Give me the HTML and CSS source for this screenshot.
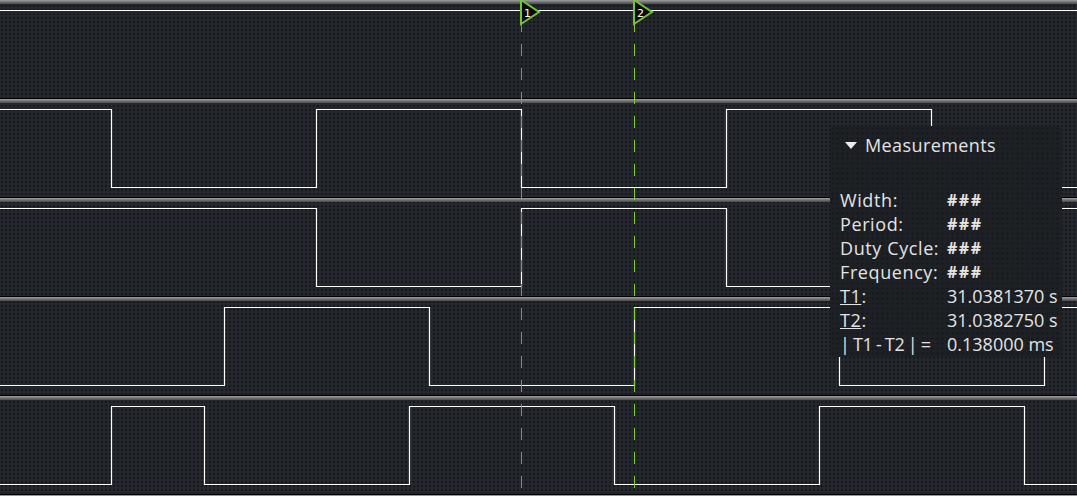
FILE: index.html
```html
<!DOCTYPE html>
<html lang="en">
<head>
    <meta charset="UTF-8">
    <title>Logic Analyzer</title>
    <link rel="stylesheet" href="styles.css">
</head>
<body>

    <div class="scope">

        <!-- channels -->
        <div class="channel">
            <div class="rail"></div>
            <svg class="wave" width="1077" height="94"><polyline points="0,6.5 1077,6.5"/></svg>
        </div>
        <div class="channel">
            <div class="rail"></div>
            <svg class="wave" width="1077" height="94"><polyline points="0,6.5 111.5,6.5 111.5,84.5 316.5,84.5 316.5,6.5 521.5,6.5 521.5,84.5 726.5,84.5 726.5,6.5 931.5,6.5 931.5,84.5 1077,84.5"/></svg>
        </div>
        <div class="channel">
            <div class="rail"></div>
            <svg class="wave" width="1077" height="94"><polyline points="0,6.5 316.5,6.5 316.5,84.5 521.5,84.5 521.5,6.5 726.5,6.5 726.5,84.5 931.5,84.5 931.5,6.5 1077,6.5"/></svg>
        </div>
        <div class="channel">
            <div class="rail"></div>
            <svg class="wave" width="1077" height="94"><polyline points="0,84.5 224.5,84.5 224.5,6.5 429.5,6.5 429.5,84.5 634.5,84.5 634.5,6.5 839.5,6.5 839.5,84.5 1044.5,84.5 1044.5,6.5 1077,6.5"/></svg>
        </div>
        <div class="channel">
            <div class="rail"></div>
            <svg class="wave" width="1077" height="94"><polyline points="0,84.5 111.5,84.5 111.5,6.5 204.5,6.5 204.5,84.5 409.5,84.5 409.5,6.5 614.5,6.5 614.5,84.5 819.5,84.5 819.5,6.5 1024.5,6.5 1024.5,84.5 1077,84.5"/></svg>
        </div>
        <div class="channel">
            <div class="rail"></div>
        </div>

        <!-- cursors -->
        <div class="cursor c1">
            <svg class="flag" width="22" height="26">
                <polygon points="1,0 1,24 19,12"/>
                <text x="4" y="17">1</text>
            </svg>
        </div>
        <div class="cursor c2">
            <svg class="flag" width="22" height="26">
                <polygon points="1,0 1,24 19,12"/>
                <text x="4" y="17">2</text>
            </svg>
        </div>

        <!-- measurements panel -->
        <div class="measure">
            <div class="measure-title"><span class="caret"></span>Measurements</div>
            <div class="measure-rows">
                <span class="label">Width:</span><span class="hash">###</span>
                <span class="label">Period:</span><span class="hash">###</span>
                <span class="label">Duty Cycle:</span><span class="hash">###</span>
                <span class="label">Frequency:</span><span class="hash">###</span>
                <span class="label"><u>T1</u>:</span><span>31.0381370 s</span>
                <span class="label"><u>T2</u>:</span><span>31.0382750 s</span>
                <span class="label diff">| T1 - T2 | =</span><span>0.138000 ms</span>
            </div>
        </div>

    </div>

</body>
</html>
```

FILE: styles.css
```css
body {
    margin: 0;
    padding: 0;
    height: 496px;
    overflow: hidden;
    background-color: #24272d;
    background-image: radial-gradient(circle, #16181c 0.9px, transparent 1.2px);
    background-size: 4px 4px;
    font-family: 'Open Sans', 'Noto Sans', sans-serif;
}
.scope {
    position: relative;
    margin-top: -1px;
    height: 497px;
    overflow: hidden;
}
.channel {
    height: 98px;
    border-top: 1px solid #000;
}
.rail {
    height: 4px;
    background: linear-gradient(#a0a0a0, #6a6a6a 60%, #4a4a4a);
}
.wave {
    display: block;
}
.wave polyline {
    fill: none;
    stroke: #fff;
    stroke-width: 1.2;
}
.cursor {
    position: absolute;
    top: 1px;
    width: 1px;
    height: 496px;
}
.cursor.c1 {
    left: 521px;
    background: linear-gradient(#63ad2f 0 32px, transparent 32px),
        repeating-linear-gradient(#63ad2f 0 8px, transparent 8px 20px, #63ad2f 20px 24px);
}
.cursor.c2 {
    left: 634px;
    background: linear-gradient(#7fce32 0 32px, transparent 32px),
        repeating-linear-gradient(#7fce32 0 8px, transparent 8px 20px, #7fce32 20px 24px);
}
.flag {
    position: absolute;
    top: 0;
    left: -1px;
}
.flag polygon {
    fill: #0a0a0a;
    stroke: #72c23a;
    stroke-width: 2;
}
.flag text {
    fill: #fff;
    font-family: 'DejaVu Sans', sans-serif;
    font-size: 11px;
}
.measure {
    position: absolute;
    left: 830px;
    top: 127px;
    width: 232px;
    height: 231px;
    box-sizing: border-box;
    padding: 7px 0 0 10px;
    background-color: #1d2025;
    background-image: radial-gradient(circle, #181a1e 1px, transparent 1.4px);
    background-size: 5px 5px;
    color: #e4e4e4;
}
.measure-title {
    display: flex;
    align-items: center;
    height: 24px;
    font-size: 18px;
    letter-spacing: 0.4px;
    margin-bottom: 31px;
}
.caret {
    width: 0;
    height: 0;
    margin: 0 8px 0 5px;
    border-left: 6px solid transparent;
    border-right: 6px solid transparent;
    border-top: 7px solid #ececec;
}
.measure-rows {
    display: grid;
    grid-template-columns: 107px auto;
    grid-auto-rows: 24px;
    align-items: center;
    font-size: 18px;
    white-space: nowrap;
}
.label {
    letter-spacing: 0.6px;
}
.label.diff {
    letter-spacing: -0.3px;
    word-spacing: -1px;
}
.hash {
    font-weight: bold;
    font-size: 16px;
    letter-spacing: 1.5px;
}
```
